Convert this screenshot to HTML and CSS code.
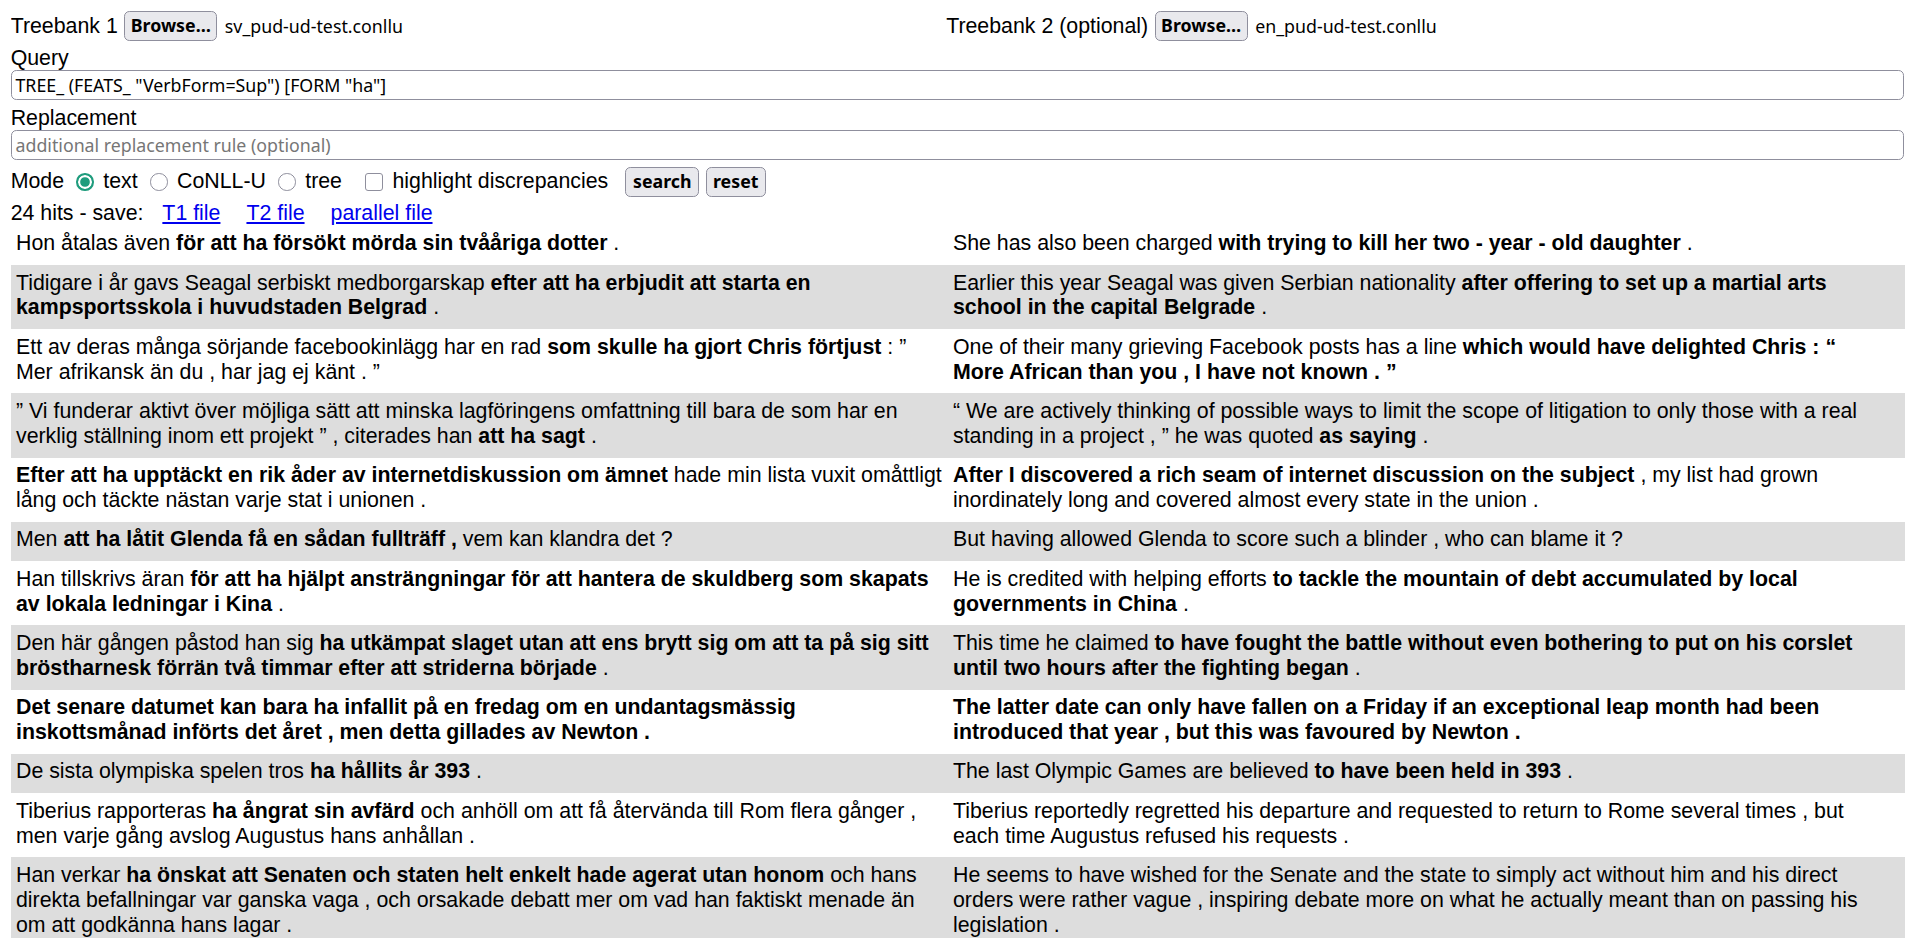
FILE: index.html
```html
<!DOCTYPE html>
<html>
<head>
<meta charset="utf-8">
<title>Treebank search</title>
<link rel="stylesheet" href="styles.css">
</head>
<body>
<div class="files">
  <div class="file-slot first"><span class="slot-label">Treebank 1</span><button class="btn">Browse…</button><span class="file-name">sv_pud-ud-test.conllu</span></div>
  <div class="file-slot"><span class="slot-label">Treebank 2 (optional)</span><button class="btn">Browse…</button><span class="file-name">en_pud-ud-test.conllu</span></div>
</div>
<div class="field-label">Query</div>
<input class="field" type="text" value='TREE_ (FEATS_ "VerbForm=Sup") [FORM "ha"]'>
<div class="field-label">Replacement</div>
<input class="field" type="text" placeholder="additional replacement rule (optional)">
<div class="mode-row">
  <span>Mode</span>
  <span class="radio checked"></span><span class="opt">text</span>
  <span class="radio"></span><span class="opt">CoNLL-U</span>
  <span class="radio"></span><span class="opt">tree</span>
  <span class="checkbox"></span><span class="opt">highlight discrepancies</span>
  <button class="btn search">search</button><button class="btn reset">reset</button>
</div>
<div class="hits">24 hits - save: <a href="#" class="save first">T1 file</a><a href="#" class="save">T2 file</a><a href="#" class="save">parallel file</a></div>
<div class="results">
  <div class="row"><div class="cell">Hon åtalas även <b>för att ha försökt mörda sin tvååriga dotter</b> .</div><div class="cell">She has also been charged <b>with trying to kill her two - year - old daughter</b> .</div></div>
  <div class="row"><div class="cell">Tidigare i år gavs Seagal serbiskt medborgarskap <b>efter att ha erbjudit att starta en kampsportsskola i huvudstaden Belgrad</b> .</div><div class="cell">Earlier this year Seagal was given Serbian nationality <b>after offering to set up a martial arts school in the capital Belgrade</b> .</div></div>
  <div class="row"><div class="cell">Ett av deras många sörjande facebookinlägg har en rad <b>som skulle ha gjort Chris förtjust</b> : ” Mer afrikansk än du , har jag ej känt . ”</div><div class="cell">One of their many grieving Facebook posts has a line <b>which would have delighted Chris : “ More African than you , I have not known . ”</b></div></div>
  <div class="row"><div class="cell">” Vi funderar aktivt över möjliga sätt att minska lagföringens omfattning till bara de som har en verklig ställning inom ett projekt ” , citerades han <b>att ha sagt</b> .</div><div class="cell">“ We are actively thinking of possible ways to limit the scope of litigation to only those with a real standing in a project , ” he was quoted <b>as saying</b> .</div></div>
  <div class="row"><div class="cell"><b>Efter att ha upptäckt en rik åder av internetdiskussion om ämnet</b> hade min lista vuxit omåttligt lång och täckte nästan varje stat i unionen .</div><div class="cell"><b>After I discovered a rich seam of internet discussion on the subject</b> , my list had grown inordinately long and covered almost every state in the union .</div></div>
  <div class="row"><div class="cell">Men <b>att ha låtit Glenda få en sådan fullträff ,</b> vem kan klandra det ?</div><div class="cell">But having allowed Glenda to score such a blinder , who can blame it ?</div></div>
  <div class="row"><div class="cell">Han tillskrivs äran <b>för att ha hjälpt ansträngningar för att hantera de skuldberg som skapats av lokala ledningar i Kina</b> .</div><div class="cell">He is credited with helping efforts <b>to tackle the mountain of debt accumulated by local governments in China</b> .</div></div>
  <div class="row"><div class="cell">Den här gången påstod han sig <b>ha utkämpat slaget utan att ens brytt sig om att ta på sig sitt bröstharnesk förrän två timmar efter att striderna började</b> .</div><div class="cell">This time he claimed <b>to have fought the battle without even bothering to put on his corslet until two hours after the fighting began</b> .</div></div>
  <div class="row"><div class="cell"><b>Det senare datumet kan bara ha infallit på en fredag om en undantagsmässig inskottsmånad införts det året , men detta gillades av Newton .</b></div><div class="cell"><b>The latter date can only have fallen on a Friday if an exceptional leap month had been introduced that year , but this was favoured by Newton .</b></div></div>
  <div class="row"><div class="cell">De sista olympiska spelen tros <b>ha hållits år 393</b> .</div><div class="cell">The last Olympic Games are believed <b>to have been held in 393</b> .</div></div>
  <div class="row"><div class="cell">Tiberius rapporteras <b>ha ångrat sin avfärd</b> och anhöll om att få återvända till Rom flera gånger , men varje gång avslog Augustus hans anhållan .</div><div class="cell">Tiberius reportedly regretted his departure and requested to return to Rome several times , but each time Augustus refused his requests .</div></div>
  <div class="row"><div class="cell">Han verkar <b>ha önskat att Senaten och staten helt enkelt hade agerat utan honom</b> och hans direkta befallningar var ganska vaga , och orsakade debatt mer om vad han faktiskt menade än om att godkänna hans lagar .</div><div class="cell">He seems to have wished for the Senate and the state to simply act without him and his direct orders were rather vague , inspiring debate more on what he actually meant than on passing his legislation .</div></div>
</div>
</body>
</html>
```

FILE: styles.css
```css
html {
  overflow: hidden;
}
body {
  margin: 10.67px;
  font-family: "Liberation Sans", Arial, sans-serif;
  font-size: 21.33px;
  color: #000;
  background: #fff;
}
.files {
  display: flex;
  align-items: center;
  height: 30px;
  margin-top: 0.5px;
  margin-bottom: 4.5px;
}
.file-slot {
  display: flex;
  align-items: center;
}
.file-slot.first {
  width: 935.5px;
}
.slot-label {
  margin-right: 6.5px;
}
.btn {
  font-family: "Noto Sans", sans-serif;
  font-size: 17.78px;
  font-weight: 700;
  height: 29.5px;
  padding: 0 5.5px;
  border: 1.33px solid #8f8f9d;
  border-radius: 5.33px;
  background: #e9e9ed;
  color: #000;
  line-height: 1;
}
.file-name {
  font-family: "Noto Sans", sans-serif;
  font-size: 17.78px;
  margin-left: 7.5px;
}
.field-label {
  line-height: 24.5px;
}
.field {
  display: block;
  box-sizing: border-box;
  width: 1893px;
  height: 30px;
  margin: -0.5px 0 6px 0.33px;
  padding: 0 3.5px;
  border: 1.33px solid #8f8f9d;
  border-radius: 5.33px;
  font-family: "Noto Sans", sans-serif;
  font-size: 17.78px;
  color: #000;
  background: #fff;
  outline: none;
}
.field::placeholder {
  color: #767676;
}
.mode-row {
  display: flex;
  align-items: center;
  height: 30px;
  margin-top: 7.3px;
  margin-bottom: 3.7px;
}
.radio {
  box-sizing: border-box;
  width: 17.5px;
  height: 17.5px;
  border-radius: 50%;
  border: 1.8px solid #8f8f9d;
  background: #fff;
  margin-left: 12.3px;
}
.radio.checked {
  border: 2px solid #1f9c7d;
  background: #1f9c7d;
  box-shadow: inset 0 0 0 2.2px #fff;
}
.checkbox {
  box-sizing: border-box;
  width: 17.5px;
  height: 17.5px;
  border-radius: 3px;
  border: 1.8px solid #8f8f9d;
  background: #fff;
  margin-left: 23.5px;
}
.opt {
  margin-left: 9.5px;
}
.btn.search {
  margin-left: 17px;
  width: 74px;
  height: 30px;
}
.btn.reset {
  margin-left: 6.5px;
  width: 60px;
  height: 30px;
}
.hits {
  line-height: 24.5px;
}
.save {
  color: #0000ee;
  text-decoration: underline;
  margin-left: 26px;
}
.save.first {
  margin-left: 13px;
}
.results {
  width: 1894px;
  margin-left: 0.33px;
  margin-top: 0.5px;
}
.row {
  display: grid;
  grid-template-columns: 937px 957px;
}
.row:nth-child(even) {
  background: #dddddd;
}
.cell {
  padding: 5.6px 5px 9.1px;
  line-height: 24.75px;
}
.cell + .cell {
  padding-right: 25px;
}
```
